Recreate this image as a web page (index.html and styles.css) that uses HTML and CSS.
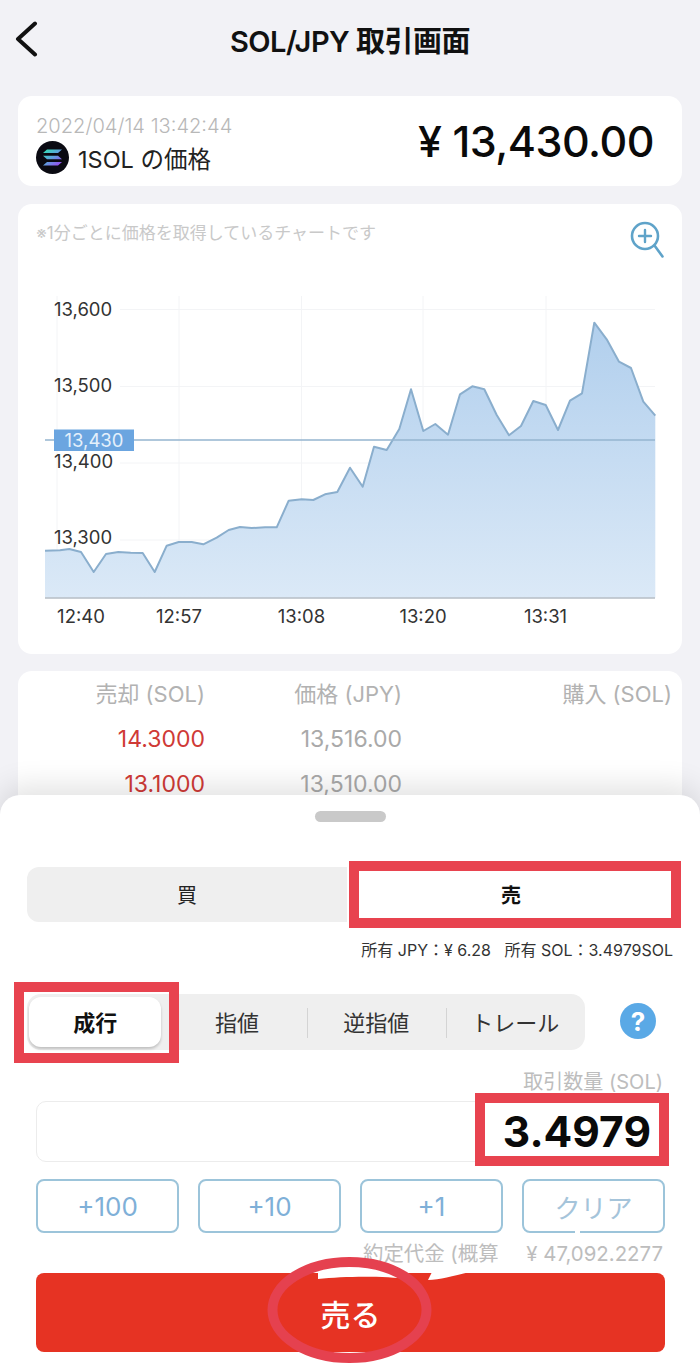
FILE: index.html
```html
<!DOCTYPE html>
<html lang="ja">
<head>
  <meta charset="UTF-8">
  <title>SOL/JPY 取引画面</title>
  <meta name="viewport" content="width=device-width, initial-scale=1.0">
  <link rel="stylesheet" href="styles.css">
</head>
<body>

<header class="topbar">
  <svg class="back" width="24" height="36" viewBox="0 0 24 36"><path d="M21 2.500 L4 18 L21 33.500" fill="none" stroke="#111" stroke-width="4" stroke-linecap="round" stroke-linejoin="round"/></svg>
  <h1>SOL/JPY 取引画面</h1>
</header>

<section class="card price-card">
  <div>
    <div class="price-date">2022/04/14 13:42:44</div>
    <div class="price-name">
      <svg width="33" height="33" viewBox="0 0 33 33">
        <defs>
          <linearGradient id="sol" x1="0" y1="0" x2="1" y2="1">
            <stop offset="0" stop-color="#2fe6b0"/>
            <stop offset="0.5" stop-color="#5f9fe0"/>
            <stop offset="1" stop-color="#a23bf0"/>
          </linearGradient>
        </defs>
        <circle cx="16.500" cy="16.500" r="16.500" fill="#0a0a12"/>
        <path d="M11 8.500 H26 L22 12 H7 Z M7 14.800 H22 L26 18.300 H11 Z M11 21 H26 L22 24.500 H7 Z" fill="url(#sol)"/>
      </svg>
      <span>1SOL の価格</span>
    </div>
  </div>
  <div class="price-value">¥ 13,430.00</div>
</section>

<section class="card chart-card">
  <svg class="chart" width="664" height="450" viewBox="18 204 664 450">
    <defs>
      <linearGradient id="area" x1="0" y1="0" x2="0" y2="1">
        <stop offset="0" stop-color="#b1cfed"/>
        <stop offset="1" stop-color="#dbe9f7"/>
      </linearGradient>
    </defs>
    <text class="chart-note" x="36" y="239">※1分ごとに価格を取得しているチャートです</text>
    <g fill="none" stroke="#5fa3c9" stroke-width="2.600" stroke-linecap="round">
      <circle cx="645" cy="236" r="13"/>
      <path d="M654.500 245.500 L662.500 256.500"/>
      <path d="M639 236 H651 M645 230 V242" stroke-width="2.400"/>
    </g>
    <g stroke="#f3f4f6" stroke-width="1">
      <path d="M57 296 V598 M179 296 V598 M301.500 296 V598 M423 296 V598 M546 296 V598"/>
      <path d="M120 309.500 H655 M120 386.500 H655 M120 463 H655 M120 540 H655"/>
    </g>
    <path fill="url(#area)" d="M45 597.700 L45 550.700 60 550.300 69.300 549 81 552 93.700 572 106 554 118.300 552 130.700 552.700 142.700 553 154.700 572 166.700 545.700 178.700 542 191.700 542 203.300 544.300 216.700 537.700 228.700 530 240 527 251.700 528 265 527.300 276.700 527.300 288.700 500.700 301.700 499.300 313.300 500 325 494.300 337.300 492 350 467.700 362.700 486.700 374 446.700 386.700 450 399.300 429 411 389.300 423.300 431 435.300 424 448 434.700 460 394.300 472.300 386.300 484.300 389.300 496.700 415 509 435.300 521 426 533.300 401 545.700 405 558 430 570 400.700 582 393.300 594.300 322.700 606.700 339.300 619 361.700 631 368 643.300 401.700 655.300 415.700 655.300 597.700 Z"/>
    <path fill="none" stroke="#8aaecd" stroke-width="2" stroke-linejoin="round" d="M45 550.700 L60 550.300 69.300 549 81 552 93.700 572 106 554 118.300 552 130.700 552.700 142.700 553 154.700 572 166.700 545.700 178.700 542 191.700 542 203.300 544.300 216.700 537.700 228.700 530 240 527 251.700 528 265 527.300 276.700 527.300 288.700 500.700 301.700 499.300 313.300 500 325 494.300 337.300 492 350 467.700 362.700 486.700 374 446.700 386.700 450 399.300 429 411 389.300 423.300 431 435.300 424 448 434.700 460 394.300 472.300 386.300 484.300 389.300 496.700 415 509 435.300 521 426 533.300 401 545.700 405 558 430 570 400.700 582 393.300 594.300 322.700 606.700 339.300 619 361.700 631 368 643.300 401.700 655.300 415.700"/>
    <path d="M45 598 H655" stroke="#b4bcc4" stroke-width="1.500"/>
    <path d="M45 440 H655" stroke="#94b5cf" stroke-width="1.500"/>
    <rect x="54" y="429.500" width="80" height="21.500" fill="#6ba5e0"/>
    <text class="axis tag-text" x="94" y="446.500">13,430</text>
    <text class="axis" x="54" y="316">13,600</text>
    <text class="axis" x="54" y="392">13,500</text>
    <text class="axis" x="54" y="468">13,400</text>
    <text class="axis" x="54" y="544">13,300</text>
    <text class="axis mid" x="81" y="623">12:40</text>
    <text class="axis mid" x="179" y="623">12:57</text>
    <text class="axis mid" x="301.500" y="623">13:08</text>
    <text class="axis mid" x="423" y="623">13:20</text>
    <text class="axis mid" x="545.500" y="623">13:31</text>
  </svg>
</section>

<section class="card book-card">
  <div class="book-row book-head"><span>売却 (SOL)</span><span>価格 (JPY)</span><span>購入 (SOL)</span></div>
  <div class="book-row"><span class="ask">14.3000</span><span>13,516.00</span><span></span></div>
  <div class="book-row"><span class="ask">13.1000</span><span>13,510.00</span><span></span></div>
</section>

<section class="sheet">
  <div class="handle"></div>

  <div class="side-tabs">
    <div class="side-tab">買</div>
    <div class="side-tab side-on">売<i class="mark mark-side"></i></div>
  </div>
  <p class="balance">所有 JPY：¥ 6.28 &nbsp; 所有 SOL：3.4979SOL</p>

  <div class="order-row">
    <div class="order-tabs">
      <div class="order-tab order-on">成行<i class="mark mark-order"></i></div>
      <div class="order-tab">指値</div>
      <div class="order-tab order-line">逆指値</div>
      <div class="order-tab order-line">トレール</div>
    </div>
    <div class="help">?</div>
  </div>

  <div class="field-label">取引数量 (SOL)</div>
  <div class="amount">
    <div class="amount-value">3.4979<i class="mark mark-amount"></i></div>
  </div>

  <div class="steps">
    <div class="step">+100</div>
    <div class="step">+10</div>
    <div class="step">+1</div>
    <div class="step step-clear">クリア</div>
  </div>

  <div class="total">約定代金 (概算)：¥ 47,092.2277</div>
  <div class="sell">売る</div>

  <svg class="scribble" width="700" height="568" viewBox="0 795 700 568">
    <path d="M499 1242 h26 v22 h-26 Z M575 1228 h5 v10 h-5 Z" fill="#fff"/>
    <path d="M318 1272 H395 L408 1279 C385 1276 345 1276 318 1279 Z M432 1272 H470 C452 1276 440 1280 428 1280 Z" fill="#fff"/>
    <ellipse cx="349.500" cy="1310" rx="77" ry="48" fill="none" stroke="#e5414f" stroke-width="10"/>
  </svg>
</section>

</body>
</html>
```

FILE: styles.css
```css
html, body {
  margin: 0;
  padding: 0;
}

body {
  position: relative;
  height: 1363px;
  overflow: hidden;
  background-color: #f2f2f6;
  font-family: 'Inter', 'Noto Sans CJK JP', sans-serif;
  color: #111;
}

.topbar {
  position: relative;
  height: 78px;
  margin-bottom: 18px;
  display: flex;
  align-items: center;
  justify-content: center;
}

.topbar h1 {
  margin: 0;
  font-size: 29px;
  font-weight: 600;
  letter-spacing: -0.5px;
}

.back {
  position: absolute;
  left: 14px;
  top: 21px;
}

.card {
  margin: 0 18px;
  background: #fff;
  border-radius: 14px;
}

/* 現在価格 */
.price-card {
  height: 90px;
  padding: 0 28px 0 18px;
  box-sizing: border-box;
  display: flex;
  justify-content: space-between;
  align-items: center;
  margin-bottom: 18px;
}

.price-date {
  font-size: 20.100px;
  font-weight: 300;
  color: #b8b8b8;
  line-height: 24px;
  margin-top: 6px;
}

.price-name {
  display: flex;
  align-items: center;
  gap: 9px;
  font-size: 23.500px;
  color: #222;
  margin-top: 3px;
}

.price-value {
  font-size: 43px;
  font-weight: 500;
  letter-spacing: -0.5px;
  color: #0a0a0a;
}

/* チャート */
.chart-card {
  height: 450px;
  margin-bottom: 17px;
}

.chart {
  display: block;
}

.chart-note {
  font-size: 17px;
  fill: #c9c9c9;
}

.axis {
  font-size: 18.500px;
  fill: #333;
}

.mid {
  text-anchor: middle;
}

.tag-text {
  text-anchor: middle;
  fill: #e4f0fb;
}

/* 板 */
.book-card {
  height: 200px;
}

.book-row {
  display: grid;
  grid-template-columns: 187px 197px 270px;
  height: 45px;
  align-items: center;
  justify-items: end;
  font-size: 23px;
  color: #a9a9a9;
}

.book-head {
  box-sizing: border-box;
  padding-bottom: 4px;
  font-size: 22px;
  color: #b2b2b2;
}

.ask {
  color: #cf3a36;
}

/* 下のシート */
.sheet {
  position: absolute;
  left: 0;
  right: 0;
  bottom: 0;
  height: 568px;
  box-sizing: border-box;
  padding: 16px 0 0;
  background: #fff;
  border-radius: 20px 20px 0 0;
  box-shadow: 0 -8px 30px rgba(0, 0, 0, 0.12);
}

.handle {
  width: 71px;
  height: 11px;
  margin: 0 auto 45px;
  border-radius: 6px;
  background: #c9c9c9;
}

.side-tabs {
  display: flex;
  margin: 0 29px 0 27px;
  height: 55px;
  border-radius: 12px;
  background: #efefef;
}

.side-tab {
  position: relative;
  flex: 1;
  display: flex;
  align-items: center;
  justify-content: center;
  font-size: 20px;
  color: #222;
}

.side-on {
  box-sizing: border-box;
  padding-left: 4px;
  background: #fff;
  font-weight: 700;
  color: #111;
}

/* 赤い囲み */
.mark {
  position: absolute;
  border: 10px solid #e8434f;
  box-sizing: border-box;
}

.mark-side {
  left: 2px;
  right: -10px;
  top: -6px;
  bottom: -6px;
}

.balance {
  margin: 18px 27px 0 0;
  text-align: right;
  font-size: 16px;
  line-height: 20px;
  color: #333;
}

.order-row {
  display: flex;
  align-items: center;
  margin: 34px 0 0 27px;
}

.order-tabs {
  width: 558px;
  height: 56px;
  display: flex;
  align-items: center;
  border-radius: 14px;
  background: #efefef;
}

.order-tab {
  position: relative;
  width: 140px;
  height: 56px;
  box-sizing: border-box;
  padding-bottom: 2px;
  display: flex;
  align-items: center;
  justify-content: center;
  font-size: 22px;
  color: #333;
}

.order-line::before {
  content: "";
  position: absolute;
  left: 0;
  top: 14px;
  height: 30px;
  width: 1px;
  background: #d4d4d4;
}

.order-on {
  width: 133px;
  height: 50px;
  margin: 0 6px 0 2px;
  background: #fff;
  border-radius: 12px;
  box-shadow: 0 2px 3px rgba(0, 0, 0, 0.2);
  font-weight: 700;
  color: #111;
}

.mark-order {
  left: -15px;
  right: -18px;
  top: -15px;
  bottom: -16px;
}

.help {
  width: 36px;
  height: 36px;
  margin: 0 0 2px 35px;
  display: flex;
  align-items: center;
  justify-content: center;
  border-radius: 50%;
  background: #5aa9e6;
  color: #fff;
  font-size: 26px;
  font-weight: 700;
}

.field-label {
  margin: 20px 37px 0 0;
  text-align: right;
  font-size: 20px;
  line-height: 24px;
  color: #bdbdbd;
}

.amount {
  display: flex;
  justify-content: flex-end;
  height: 61px;
  margin: 7px 35px 0 36px;
  box-sizing: border-box;
  border: 1px solid #ececec;
  border-radius: 10px;
}

.amount-value {
  position: relative;
  padding-right: 13px;
  line-height: 59px;
  font-size: 42.500px;
  font-weight: 700;
  color: #0a0a0a;
}

.mark-amount {
  left: -28px;
  right: -5px;
  top: -9px;
  bottom: -5px;
}

.steps {
  display: grid;
  grid-template-columns: repeat(4, 143px);
  justify-content: space-between;
  margin: 17px 35px 0 36px;
}

.step {
  height: 54px;
  box-sizing: border-box;
  display: flex;
  align-items: center;
  justify-content: center;
  border: 2px solid #9cc4da;
  border-radius: 8px;
  font-size: 26px;
  color: #7fb0d8;
}

.step-clear {
  color: #a5c4da;
}

.total {
  margin: 9px 37px 0 0;
  text-align: right;
  font-size: 20.400px;
  line-height: 24px;
  color: #bdbdbd;
}

.sell {
  height: 79px;
  margin: 7px 35px 0 36px;
  display: flex;
  align-items: center;
  justify-content: center;
  border-radius: 8px;
  background: #e63323;
  color: #fff;
  font-size: 30px;
  font-weight: 500;
}

.scribble {
  position: absolute;
  left: 0;
  top: 0;
}
```
